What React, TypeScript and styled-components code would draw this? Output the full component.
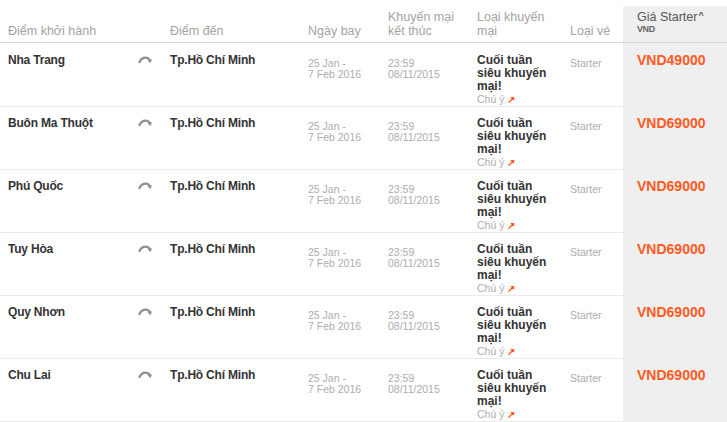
import React, { FC } from "react";
import styled, { createGlobalStyle } from "styled-components";

type Route = {
    from: string;
    to: string;
    price: string;
};

const routes: Route[] = [
    { from: "Nha Trang", to: "Tp.Hồ Chí Minh", price: "VND49000" },
    { from: "Buôn Ma Thuột", to: "Tp.Hồ Chí Minh", price: "VND69000" },
    { from: "Phú Quốc", to: "Tp.Hồ Chí Minh", price: "VND69000" },
    { from: "Tuy Hòa", to: "Tp.Hồ Chí Minh", price: "VND69000" },
    { from: "Quy Nhơn", to: "Tp.Hồ Chí Minh", price: "VND69000" },
    { from: "Chu Lai", to: "Tp.Hồ Chí Minh", price: "VND69000" },
];

const COLUMNS = "130px 32px 138px 80px 89px 93px 61px 1fr";

const Colors = {
    head: "#a3a3a3",
    text: "#333333",
    muted: "#adadad",
    orange: "#ff5a1f",
    priceBack: "#efefef",
    line: "#ebebeb",
    headLine: "#d8d8d8",
};

const GlobalStyle = createGlobalStyle`
    html, body {
        margin: 0;
        padding: 0;
        background: #fff;
        font-family: "Liberation Sans", Arial, sans-serif;
    }
`;

// small "turn" arrow between origin and destination
const TurnIcon: FC = () => (
    <svg width="15" height="8" viewBox="0 0 15 8" style={{ display: "block" }}>
        <path d="M1.5 6 Q3.5 1.5 8 1.6 Q10.5 1.8 11.8 4" fill="none" stroke="#8f8f8f" strokeWidth="2.3" strokeLinecap="round" />
        <path d="M9.6 4.2 L14 3.2 L12.4 7.2 Z" fill="#8f8f8f" />
    </svg>
);

const App: FC = () => {
    return (
        <>
            <GlobalStyle />
            <Page>
                <HeaderRow>
                    <HeadCell>Điểm khởi hành</HeadCell>
                    <HeadCell />
                    <HeadCell>Điểm đến</HeadCell>
                    <HeadCell>Ngày bay</HeadCell>
                    <HeadCell>Khuyến mại kết thúc</HeadCell>
                    <HeadCell>Loại khuyến mại</HeadCell>
                    <HeadCell>Loại vé</HeadCell>
                    <PriceHead>
                        <span className="title">Giá Starter<b>^</b></span>
                        <span className="unit">VND</span>
                    </PriceHead>
                </HeaderRow>
                {routes.map((route) => (
                    <Row key={route.from}>
                        <Cell>
                            <Strong>{route.from}</Strong>
                        </Cell>
                        <IconCell>
                            <TurnIcon />
                        </IconCell>
                        <Cell>
                            <Strong>{route.to}</Strong>
                        </Cell>
                        <Cell>
                            <Small>
                                25 Jan -<br />7 Feb 2016
                            </Small>
                        </Cell>
                        <Cell>
                            <Small>
                                23:59<br />08/11/2015
                            </Small>
                        </Cell>
                        <Cell>
                            <Promo>Cuối tuần siêu khuyến mại!</Promo>
                            <Note>
                                Chú ý <span>↗</span>
                            </Note>
                        </Cell>
                        <Cell>
                            <Small>Starter</Small>
                        </Cell>
                        <PriceCell>{route.price}</PriceCell>
                    </Row>
                ))}
            </Page>
        </>
    );
};

export default App;

const Page = styled.div`
    width: 727px;
    height: 422px;
    padding-top: 6px;
    box-sizing: border-box;
    overflow: hidden;
    background: linear-gradient(to right, #fff 623px, ${Colors.priceBack} 623px);
    background-size: 100% calc(100% - 6px);
    background-position: 0 6px;
    background-repeat: no-repeat;
`;

const HeaderRow = styled.div`
    display: grid;
    grid-template-columns: ${COLUMNS};
    height: 36px;
    border-bottom: 1px solid ${Colors.headLine};
    box-sizing: content-box;
`;

const HeadCell = styled.div`
    display: flex;
    align-items: flex-end;
    padding: 0 8px 4px 8px;
    font-size: 12.5px;
    line-height: 14px;
    color: ${Colors.head};
`;

const PriceHead = styled.div`
    display: flex;
    flex-direction: column;
    padding: 4px 14px 0 14px;
    background: ${Colors.priceBack};

    .title {
        font-size: 12.5px;
        line-height: 14px;
        color: #555;
    }

    b {
        font-size: 9px;
        vertical-align: top;
        line-height: 11px;
        margin-left: 1px;
    }

    .unit {
        font-size: 9px;
        line-height: 11px;
        font-weight: bold;
        color: #666;
        letter-spacing: -0.4px;
    }
`;

const Row = styled.div`
    display: grid;
    grid-template-columns: ${COLUMNS};
    height: 63px;
`;

const Cell = styled.div`
    padding: 11px 8px 0 8px;
    border-bottom: 1px solid ${Colors.line};
    min-width: 0;
`;

const IconCell = styled(Cell)`
    padding-top: 13px;
`;

const Strong = styled.div`
    font-size: 12px;
    line-height: 13px;
    font-weight: bold;
    color: ${Colors.text};
    letter-spacing: -0.2px;
`;

const Small = styled.div`
    font-size: 10.5px;
    line-height: 11px;
    color: ${Colors.muted};
    padding-top: 4px;
`;

const Promo = styled.div`
    font-size: 12px;
    line-height: 13px;
    font-weight: bold;
    color: ${Colors.text};
    width: 72px;
`;

const Note = styled.div`
    font-size: 10.5px;
    line-height: 12px;
    color: ${Colors.muted};

    span {
        color: ${Colors.orange};
        font-weight: bold;
        font-size: 10px;
    }
`;

const PriceCell = styled.div`
    padding: 10px 14px 0 14px;
    font-size: 14px;
    line-height: 15px;
    font-weight: bold;
    color: ${Colors.orange};
`;
